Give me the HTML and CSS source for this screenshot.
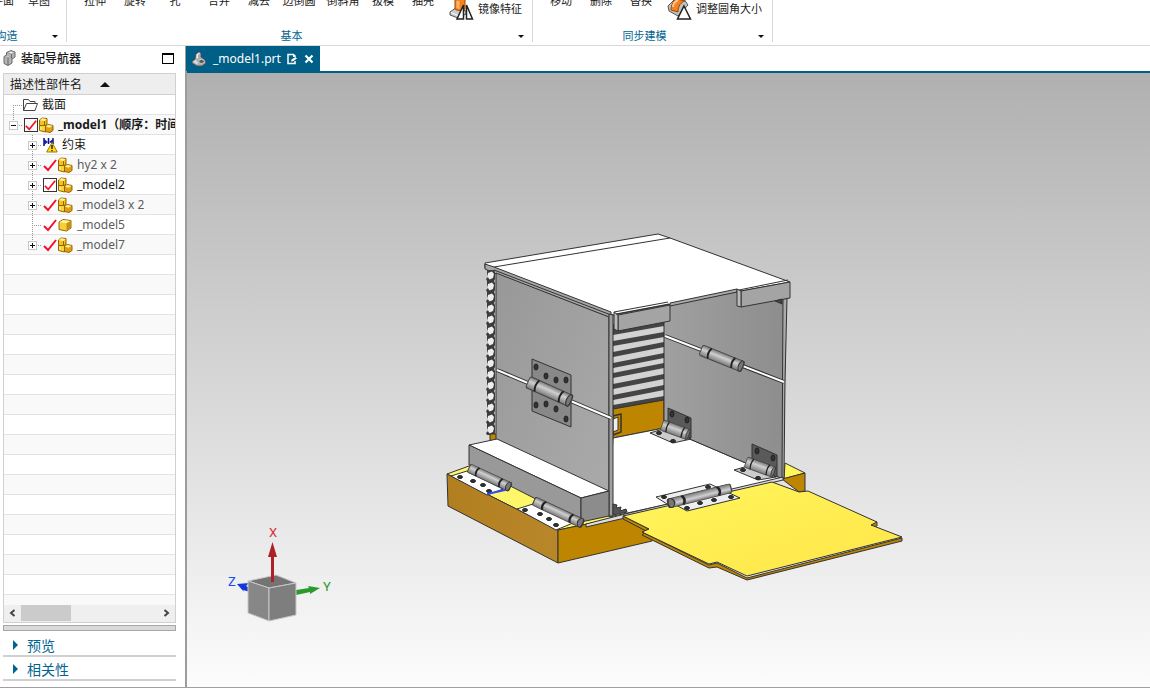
FILE: index.html
```
<!DOCTYPE html>
<html lang="zh-CN">

<head>
  <meta charset="UTF-8">
  <meta name="viewport" content="width=device-width, initial-scale=1.0">
  <title>_model1.prt</title>
  <link rel="stylesheet" href="styles.css">
</head>

<body>
  <svg class="sprite" aria-hidden="true">
    <symbol id="assembly" viewBox="0 0 16 16">
      <path d="M1.500 3 4 1l5 .5V7l-2 1.500H1.500z" fill="#f2c21c" stroke="#936600"/>
      <path d="M2 3.300l4.500.7L8.500 2 4 1.300z" fill="#fff29a"/>
      <path d="M6.500 4v4" stroke="#936600"/>
      <path d="M1.500 8.500H7.500V15L1.500 13.500z" fill="#f8d33a" stroke="#936600"/>
      <path d="M7.500 9.500 10 7.500l5 1v5L12 15.500l-4.500-1z" fill="#dfa112" stroke="#936600"/>
      <path d="M8 9.700l3.700 1L14.500 8.800 10 7.900z" fill="#fff08a"/>
      <path d="M3 10v3" stroke="#fff7b8"/>
    </symbol>
    <symbol id="part" viewBox="0 0 16 16">
      <path d="M2 5 6 2.500l8 1v7.500L9.500 14 2 12.500z" fill="#f6cf3c" stroke="#936600"/>
      <path d="M2.500 5.200 9.500 6.200 13.500 4 6 3z" fill="#fff3a0"/>
      <path d="M9.500 6.200 13.600 4v6.800L9.500 13.500z" fill="#c98f0c"/>
    </symbol>
  </svg>

  <header class="ribbon">
    <section class="group group-first">
      <div class="tools">
        <button class="tool narrow">平面</button>
        <button class="tool narrow">草图</button>
      </div>
      <div class="caption"><span>构造</span><button class="more" aria-label="更多构造"></button></div>
    </section>
    <section class="group group-basic">
      <div class="tools">
        <button class="tool">拉伸</button>
        <button class="tool">旋转</button>
        <button class="tool">孔</button>
        <button class="tool start">合并</button>
        <button class="tool">减去</button>
        <button class="tool">边倒圆</button>
        <button class="tool start">倒斜角</button>
        <button class="tool">拔模</button>
        <button class="tool">抽壳</button>
        <button class="tool-wide">
          <svg width="26" height="24" viewBox="0 0 26 24">
            <path d="M1 14 8 9l9 4v3l-8 4-8-3z" fill="#c9ccce" stroke="#555"/>
            <path d="M2 14.500l7 3 7-3" fill="none" stroke="#fff"/>
            <path d="M6 1h10v10c-2 2-8 2-10 0z" fill="#f58220" stroke="#9c4700"/>
            <path d="M7.500 3h3v8l-3-1z" fill="#ffb36b"/>
            <path d="M14.500 7v14H8zM17.500 7v14h6z" fill="#fff" stroke="#222" stroke-width="1.500"/>
          </svg>
          <span>镜像特征</span>
        </button>
      </div>
      <div class="caption"><span>基本</span><button class="more" aria-label="更多基本"></button></div>
    </section>
    <section class="group group-sync">
      <div class="tools">
        <button class="tool">移动</button>
        <button class="tool">删除</button>
        <button class="tool">替换</button>
        <button class="tool-wide">
          <svg width="26" height="24" viewBox="0 0 26 24">
            <path d="M1 8 8 1l9 0 4 6-10 11L2 13z" fill="#bfc2c4" stroke="#555"/>
            <path d="M4 12c0-6 3-10 6-11l8 2c-4 1-7 5-7 11z" fill="#f58220" stroke="#9c4700"/>
            <path d="M6 9c0-4 3-6 5-7" fill="none" stroke="#ffc48c" stroke-width="2"/>
            <path d="M17 8l6.500 13h-13z" fill="#fff" stroke="#222" stroke-width="1.500"/>
          </svg>
          <span>调整圆角大小</span>
        </button>
      </div>
      <div class="caption"><span>同步建模</span><button class="more" aria-label="更多同步建模"></button></div>
    </section>
  </header>

  <div class="workspace">
    <aside class="navigator">
      <div class="nav-title">
        <svg width="14" height="16" viewBox="0 0 14 16">
          <path d="M1 6.500 3.500 5V2.500L8 .5l4 1.500v5L9 9v4l-4 2.500-4-2z" fill="#b4b4b4" stroke="#666"/>
          <path d="M4 2.700 8.500 4 11.500 2.300 8 1zM1.500 6.700l3.500 1L8 6.500" fill="#eee" stroke="#888" stroke-width=".7"/>
          <path d="M8.500 4v4.500M5 8v7" stroke="#666"/>
        </svg>
        <h1>装配导航器</h1>
        <button class="maximize" aria-label="最大化"></button>
      </div>

      <div class="tree-panel">
        <button class="column-head">描述性部件名 <i></i></button>
        <ul class="tree">
          <li class="row">
            <span class="branch first"></span>
            <svg class="folder" width="15" height="16" viewBox="0 0 15 16">
              <path d="M.5 13.500V2.500h5l1.500 2h5v2M.5 13.500 3.500 6.500h11l-2.500 7z" fill="#fff" stroke="#444"/>
            </svg>
            <span class="name">截面</span>
          </li>
          <li class="row bold">
            <span class="branch last"><button class="expander" aria-label="折叠"></button></span>
            <input type="checkbox" class="check boxed" aria-label="_model1" checked>
            <svg class="cube" width="16" height="16"><use href="#assembly"/></svg>
            <span class="name">_model1（顺序：时间顺序）</span>
          </li>
          <li class="row child">
            <span class="branch"><button class="expander plus" aria-label="展开"></button></span>
            <svg class="constraint" width="15" height="16" viewBox="0 0 15 16">
              <path d="M1 1v8M10 1v6M5.500 1v6" stroke="#0a1280" stroke-width="1.500"/>
              <path d="M1 2l4 3-4 3zM10 2 6 5l4 2z" fill="#1522b0"/>
              <path d="M9 5.500 14.300 15H3.700z" fill="#ffdd1a" stroke="#a07800"/>
              <path d="M9 8v4M9 13v1.300" stroke="#222" stroke-width="1.500"/>
            </svg>
            <span class="name">约束</span>
          </li>
          <li class="row child">
            <span class="branch"><button class="expander plus" aria-label="展开"></button></span>
            <input type="checkbox" class="check" aria-label="hy2 x 2" checked>
            <svg class="cube" width="16" height="16"><use href="#assembly"/></svg>
            <span class="name dim">hy2 x 2</span>
          </li>
          <li class="row child">
            <span class="branch"><button class="expander plus" aria-label="展开"></button></span>
            <input type="checkbox" class="check boxed" aria-label="_model2" checked>
            <svg class="cube" width="16" height="16"><use href="#assembly"/></svg>
            <span class="name">_model2</span>
          </li>
          <li class="row child">
            <span class="branch"><button class="expander plus" aria-label="展开"></button></span>
            <input type="checkbox" class="check" aria-label="_model3 x 2" checked>
            <svg class="cube" width="16" height="16"><use href="#assembly"/></svg>
            <span class="name dim">_model3 x 2</span>
          </li>
          <li class="row child">
            <span class="branch"></span>
            <input type="checkbox" class="check" aria-label="_model5" checked>
            <svg class="cube" width="16" height="16"><use href="#part"/></svg>
            <span class="name dim">_model5</span>
          </li>
          <li class="row child">
            <span class="branch last"><button class="expander plus" aria-label="展开"></button></span>
            <input type="checkbox" class="check" aria-label="_model7" checked>
            <svg class="cube" width="16" height="16"><use href="#assembly"/></svg>
            <span class="name dim">_model7</span>
          </li>
        </ul>
        <div class="scrollbar">
          <button aria-label="向左"><svg width="7" height="8" viewBox="0 0 7 8"><path d="M5.500 1 2 4l3.500 3" fill="none" stroke="#444" stroke-width="2"/></svg></button>
          <div class="track"><div class="thumb"></div></div>
          <button aria-label="向右"><svg width="7" height="8" viewBox="0 0 7 8"><path d="M1.500 1 5 4 1.500 7" fill="none" stroke="#444" stroke-width="2"/></svg></button>
        </div>
      </div>

      <div class="splitter"></div>
      <button class="fold">预览</button>
      <button class="fold">相关性</button>
    </aside>

    <main class="view">
      <div class="tabs">
        <div class="tab">
          <svg width="16" height="16" viewBox="0 0 16 16">
            <path d="M1 10.500 4 8 5 3l3-2 2 1v4l4 3 1 3-4 3H6l-5-3z" fill="#a9adb0" stroke="#4a4a4a" stroke-width=".8"/>
            <path d="M5.500 3.500 8 1.500l1 .5-2 2v3l-1.500 1z" fill="#eceeef"/>
            <path d="M2 10.500l3-1.500 2 3-1 1.500z" fill="#dadddf"/>
            <ellipse cx="10.500" cy="10.500" rx="2.800" ry="2" fill="#54595d" stroke="#ddd" stroke-width=".8"/>
          </svg>
          <span>_model1.prt</span>
          <svg width="11" height="12" viewBox="0 0 11 12">
            <path d="M8 8v2.500H1V1.500h5.500L8.500 3.500" fill="none" stroke="#fff" stroke-width="1.500"/>
            <path d="M6 1v3h3z" fill="#fff"/>
            <path d="M4 8.500 4.500 6.500 8.500 4l1.500 1.500L6 8.200z" fill="#fff"/>
          </svg>
          <button class="close" aria-label="关闭">
            <svg width="10" height="10" viewBox="0 0 10 10"><path d="M1.500 1.500l7 7M8.500 1.500l-7 7" stroke="#fff" stroke-width="2.200"/></svg>
          </button>
        </div>
      </div>

      <svg class="canvas" viewBox="187 73 963 614" role="img" aria-label="装配模型">
        <defs>
          <linearGradient id="wall" x1="0" y1="0" x2="1" y2="1">
            <stop offset="0" stop-color="#989898"/><stop offset="1" stop-color="#ababab"/>
          </linearGradient>
          <linearGradient id="inner" x1="0" y1="0" x2="1" y2="0">
            <stop offset="0" stop-color="#a0a0a0"/><stop offset="1" stop-color="#8d8d8d"/>
          </linearGradient>
          <linearGradient id="ramp" x1="0" y1="0" x2="1" y2="1">
            <stop offset="0" stop-color="#fff55c"/><stop offset="1" stop-color="#ffe648"/>
          </linearGradient>
          <linearGradient id="gold" x1="0" y1="0" x2="1" y2="0">
            <stop offset="0" stop-color="#b27f20"/><stop offset="1" stop-color="#b88729"/>
          </linearGradient>
          <linearGradient id="tube" x1="0" y1="0" x2="0" y2="1">
            <stop offset="0" stop-color="#777"/><stop offset=".4" stop-color="#d0d0d0"/><stop offset="1" stop-color="#777"/>
          </linearGradient>
          <pattern id="chain" x="485" y="270" width="11" height="11" patternUnits="userSpaceOnUse">
            <path d="M2 0 9 0 10 2V9L9 11H2L1 9 3 7 2 4z" fill="#3c3c3c"/>
            <path d="M3 3 7 1.500 9 4 8 8 4.500 9.500 2.500 6.500z" fill="#eee"/>
          </pattern>
          <!-- hinge barrel, 48 long on the x axis -->
          <g id="barrel">
            <rect x="0" y="-6" width="48" height="12" rx="2" fill="url(#tube)" stroke="#444"/>
            <path d="M10-6q-3 6 0 12M37-6q-3 6 0 12" fill="none" stroke="#222" stroke-width="2"/>
            <path d="M45-6q-4 6 0 12h2q2-6 0-12z" fill="#777" stroke="#333"/>
          </g>
        </defs>

        <g class="edges">
          <!-- base -->
          <path d="M447 474 469 466 623 514 623 517 558 530z" fill="#fff76a"/>
          <path d="M447 474 558 530V563L448 506z" fill="url(#gold)"/>
          <path d="M558 530 625 516 655 530 652 541 558 563z" fill="#bd8500"/>
          <path d="M785 463 805 473 784 479z" fill="#fff55c"/>
          <path d="M782 479 805 473V491L799 492z" fill="#bd8500"/>

          <!-- inside of the box -->
          <path d="M613 325 664 312V402L613 411z" fill="#444"/>
          <path class="slats" d="M613 335 664 326V332L613 341zM613 346 664 337V342L613 352zM613 357 664 347V353L613 363zM613 368 664 358V363L613 373zM613 378 664 368V374L613 384zM613 389 664 379V385L613 395zM613 400 664 390V396L613 405z"/>
          <path d="M613 409 664 400V428L613 438z" fill="#bd8500"/>
          <path d="M613 416 621 414V432L613 435z" fill="#bd8500" stroke-width="1.500"/>
          <path d="M613 419 618 417V430L613 432z" fill="#eee"/>
          <path d="M613 438 664 428 783 479 609 517V500z" fill="#fff"/>
          <path d="M664 304 738 289 786 298 783 479 664 428z" fill="url(#inner)"/>
          <path d="M783 299 787 298 785 381 784 479 782 477z" fill="#aaa"/>
          <path d="M665 336 784 382" stroke="#333" stroke-width="4"/>
          <path d="M665 336 784 382" stroke="#fff" stroke-width="2"/>
          <use href="#barrel" transform="translate(701 350) rotate(22) scale(.94 .9)"/>

          <!-- lid -->
          <path d="M485 263 658 234 670 238 790 282 741 291 613 315 485 268z" fill="#fff"/>
          <path d="M494 267 670 238" fill="none"/>
          <path d="M485 264 494 267 611 312 611 318 494 273 485 269z" fill="#a6a6a6"/>
          <path d="M494 270 611 315" fill="none"/>
          <path d="M670 303 737 289V292L670 306z" fill="#aaa"/>
          <path d="M741 291 790 282V298L741 307z" fill="#a4a4a4"/>
          <path d="M737 289 741 291V307L737 306z" fill="#bbb"/>
          <path d="M739 290 788 280" fill="none"/>
          <path d="M775 301 782 299V304z" fill="#444"/>
          <path d="M618 315 670 305V321L618 331z" fill="#a4a4a4"/>
          <path d="M614 312 618 315V331L614 329z" fill="#bbb"/>
          <path d="M614 312 668 302M616 314 669 304" fill="none"/>

          <!-- left wall and chain -->
          <rect x="485" y="270" width="11" height="165" fill="url(#chain)" stroke="none"/>
          <path d="M490 434H497V442H490z" fill="#bd8500"/>
          <path d="M496 273 609 317V516L496 460z" fill="url(#wall)"/>
          <path d="M609 314 613 315V516H609z" fill="#a0a0a0"/>
          <path d="M497 370 611 418" stroke="#333" stroke-width="4"/>
          <path d="M497 370 611 418" stroke="#fff" stroke-width="2"/>
          <path d="M532 359 571 375V427L532 411z" fill="#888"/>
          <g class="holes">
            <ellipse cx="536" cy="367" rx="2" ry="3"/><ellipse cx="546" cy="376" rx="2" ry="3"/>
            <ellipse cx="556" cy="380" rx="2" ry="3"/><ellipse cx="566" cy="380" rx="2" ry="3"/>
            <ellipse cx="536" cy="405" rx="2" ry="3"/><ellipse cx="546" cy="404" rx="2" ry="3"/>
            <ellipse cx="556" cy="409" rx="2" ry="3"/><ellipse cx="566" cy="419" rx="2" ry="3"/>
          </g>
          <use href="#barrel" transform="translate(528 382) rotate(24) scale(.98 1)"/>

          <!-- step block -->
          <path d="M469 445 497 439 609 491 581 498z" fill="#fff"/>
          <path d="M469 445 581 498V522L469 465z" fill="#999"/>
          <path d="M581 498 609 491V516L581 522z" fill="#8c8c8c"/>
          <path d="M586 524 625 514 783 477V480L625 518 586 527z" fill="#ddd"/>
          <path d="M613 504 617 505 616 508 621 507 620 511 626 509 627 512 613 515z" fill="#555"/>

          <!-- outer hinges -->
          <path d="M451 476 467 471 503 489 487 495z" fill="#fff"/>
          <path d="M517 509 533 504 573 523 556 530z" fill="#fff"/>
          <g class="holes">
            <ellipse cx="460" cy="477" rx="2.500" ry="1.500"/><ellipse cx="473" cy="481" rx="2.500" ry="1.500"/>
            <ellipse cx="483" cy="485" rx="2.500" ry="1.500"/><ellipse cx="489" cy="491" rx="2.500" ry="1.500"/>
            <ellipse cx="525" cy="510" rx="2.500" ry="1.500"/><ellipse cx="540" cy="514" rx="2.500" ry="1.500"/>
            <ellipse cx="549" cy="519" rx="2.500" ry="1.500"/><ellipse cx="556" cy="525" rx="2.500" ry="1.500"/>
          </g>
          <use href="#barrel" transform="translate(469 468) rotate(25) scale(.95 .75)"/>
          <use href="#barrel" transform="translate(534 501) rotate(25) scale(1.120 .75)"/>
          <path d="M487 494 505 490" stroke="#2d4cff" stroke-width="2"/>

          <!-- inner hinges -->
          <path d="M668 408 691 418V438L668 430z" fill="#5a5a5a"/>
          <path d="M650 433 663 429 691 439 673 443z" fill="#ccc"/>
          <path d="M752 444 777 455V477L752 466z" fill="#5a5a5a"/>
          <path d="M734 470 748 466 776 477 758 480z" fill="#ccc"/>
          <g class="holes">
            <ellipse cx="672" cy="414" rx="2" ry="3"/><ellipse cx="687" cy="420" rx="2" ry="3"/>
            <ellipse cx="757" cy="451" rx="2" ry="3"/><ellipse cx="773" cy="458" rx="2" ry="3"/>
            <ellipse cx="659" cy="433" rx="2.500" ry="1.500"/><ellipse cx="673" cy="441" rx="2.500" ry="1.500"/>
            <ellipse cx="743" cy="470" rx="2.500" ry="1.500"/><ellipse cx="758" cy="478" rx="2.500" ry="1.500"/>
          </g>
          <use href="#barrel" transform="translate(662 425) rotate(20) scale(.6 .9)"/>
          <use href="#barrel" transform="translate(746 462) rotate(20) scale(.63 .9)"/>

          <!-- ramp -->
          <path d="M623 516 649 529 642 532 709 565 717 563 747 578 902 538V541L747 580 717 567 709 568 642 535 646 531 623 519z" fill="#bd8500"/>
          <path d="M871 524 877 522V526L873 527z" fill="#bd8500"/>
          <path d="M623 516 772 482 799 492 808 491 877 522 871 525 902 537 747 576 717 562 709 564 642 532 649 529z" fill="url(#ramp)"/>
          <path d="M656 497 710 484 740 498 687 511 676 505 667 504z" fill="#eee"/>
          <g class="holes">
            <ellipse cx="687" cy="508" rx="2.500" ry="1.500"/><ellipse cx="700" cy="503" rx="2.500" ry="1.500"/>
            <ellipse cx="714" cy="500" rx="2.500" ry="1.500"/><ellipse cx="731" cy="497" rx="2.500" ry="1.500"/>
            <ellipse cx="664" cy="497" rx="2.500" ry="1.500"/><ellipse cx="708" cy="487" rx="2.500" ry="1.500"/>
          </g>
          <use href="#barrel" transform="translate(731 488) rotate(166) scale(1.350 .75)"/>
        </g>

        <!-- axis triad -->
        <path d="M237 584 249 583 246 586 250 588V592L243 590 244 592z" fill="#1438d8"/>
        <path d="M296 590 309 588 308 586 320 588 310 594V592L296 595z" fill="#2a9a2a"/>
        <g class="triad">
          <path d="M248 581 276 575 296 583 269 588z" fill="#747474"/>
          <path d="M248 581 269 588V621L248 613z" fill="#878787"/>
          <path d="M269 588 296 583V615L269 621z" fill="#7e7e7e"/>
        </g>
        <path d="M271 582V557H268L272.500 542 277 557H274V582z" fill="#ad2028"/>
        <text class="axis" x="273" y="537" fill="#d92f3a">X</text>
        <text class="axis" x="232" y="586" fill="#1b4df0">Z</text>
        <text class="axis" x="327" y="591" fill="#2a9a2a">Y</text>
      </svg>
    </main>
  </div>
</body>

</html>
```
FILE: styles.css
```
* {
  box-sizing: border-box;
}

body {
  margin: 0;
  height: 100vh;
  display: flex;
  flex-direction: column;
  overflow: hidden;
  background: #fff;
  color: #1a1a1a;
  font-family: "Noto Sans", "Noto Sans CJK SC", sans-serif;
  font-size: 12px;
}

button {
  margin: 0;
  padding: 0;
  border: none;
  background: none;
  color: inherit;
  font: inherit;
  cursor: pointer;
}

svg {
  display: block;
  flex: none;
}

.sprite {
  position: absolute;
  width: 0;
  height: 0;
}

/* ribbon */
.ribbon {
  display: flex;
  flex: none;
  height: 46px;
  overflow: hidden;
  border-bottom: 1px solid #d8d8d8;
  font-size: 11px;
}

.group {
  display: flex;
  flex-direction: column;
  justify-content: flex-end;
  flex: none;
  height: 42px;
  padding-left: 8px;
  border-right: 1px solid #d8d8d8;
}

.group-first {
  width: 104px;
  margin-left: -37px;
}

.group-basic {
  width: 466px;
}

.group-sync {
  width: 240px;
}

.tools {
  display: flex;
  align-items: flex-end;
  height: 48px;
  padding-bottom: 6px;
}

.group-first .tools {
  justify-content: flex-end;
  padding-right: 9px;
}

.tool {
  width: 40px;
  height: 29px;
  padding-bottom: 13px;
  line-height: 16px;
  white-space: nowrap;
}

.narrow {
  width: 36px;
}

.start {
  margin-left: 4px;
}

.tool-wide {
  display: flex;
  align-items: center;
  gap: 3px;
  height: 24px;
  margin-left: 6px;
  white-space: nowrap;
}

.tool-wide span {
  padding-bottom: 5px;
}

.caption {
  display: flex;
  align-items: center;
  flex: none;
  height: 16px;
  margin-bottom: -2px;
  color: #00648f;
}

.caption span {
  flex: 1;
  padding: 0 2px 2px 0;
  text-align: center;
}

.more {
  width: 22px;
  height: 12px;
  display: flex;
  align-items: center;
  justify-content: center;
}

.more::after {
  content: "";
  border: 3px solid transparent;
  border-top-color: #111;
  border-bottom: none;
}

.workspace {
  display: flex;
  flex: 1;
  min-height: 0;
  margin-bottom: 3px;
  border-bottom: 1px solid #a0a0a0;
}

/* navigator */
.navigator {
  display: flex;
  flex-direction: column;
  flex: none;
  width: 187px;
  padding: 0 9px 6px 3px;
  border-right: 2px solid #9c9c9c;
}

.nav-title {
  display: flex;
  align-items: center;
  gap: 4px;
  height: 27px;
  padding-bottom: 3px;
}

.nav-title h1 {
  flex: 1;
  margin: 0;
  font-size: 12px;
  font-weight: 500;
}

.maximize {
  width: 12px;
  height: 11px;
  margin-right: 2px;
  border: 1px solid #000;
  border-top-width: 2px;
}

.tree-panel {
  display: flex;
  flex-direction: column;
  flex: 1;
  min-height: 0;
  border: 1px solid #d0d0d0;
}

.column-head {
  display: flex;
  align-items: center;
  gap: 18px;
  flex: none;
  height: 21px;
  padding-left: 6px;
  background: #eee;
  border-bottom: 1px solid #d0d0d0;
}

.column-head i {
  border: 5px solid transparent;
  border-bottom-color: #111;
  border-top: none;
}

.tree {
  flex: 1;
  margin: 0;
  padding: 0;
  overflow: hidden;
  list-style: none;
  background: repeating-linear-gradient(#fff 0 19px, #e3e3e3 19px 20px, #f9f9f9 20px 39px, #e3e3e3 39px 40px);
}

.row {
  display: flex;
  align-items: center;
  height: 20px;
  white-space: nowrap;
}

.child {
  padding-left: 19px;
}

.bold {
  font-weight: 700;
}

.branch {
  display: flex;
  align-items: center;
  justify-content: center;
  flex: none;
  width: 19px;
  height: 20px;
  margin-right: 1px;
  background:
    repeating-linear-gradient(#999 0 1px, transparent 1px 2px) 9px 0 / 1px 20px no-repeat,
    repeating-linear-gradient(90deg, #999 0 1px, transparent 1px 2px) 9px 10px / 10px 1px no-repeat;
}

.branch.last {
  background-size: 1px 10px, 10px 1px;
}

.branch.first {
  margin-right: 0;
  background-size: 1px 10px, 10px 1px;
  background-position: 9px 10px, 9px 10px;
}

.expander {
  width: 9px;
  height: 9px;
  border: 1px solid #c8c8c8;
  background: linear-gradient(#111, #111) center / 5px 1px no-repeat #fff;
}

.expander.plus {
  background:
    linear-gradient(#111, #111) center / 5px 1px no-repeat,
    linear-gradient(#111, #111) center / 1px 5px no-repeat #fff;
}

.check {
  appearance: none;
  flex: none;
  width: 14px;
  height: 14px;
  margin: 0;
}

.check:checked {
  background: url("data:image/svg+xml,%3Csvg xmlns='http://www.w3.org/2000/svg' viewBox='0 0 14 14'%3E%3Cpath d='M1 8l4 4 8-10' fill='none' stroke='%23f5102c' stroke-width='2'/%3E%3C/svg%3E") center / 100% 100% no-repeat;
}

.boxed {
  border: 1px solid #333;
  background-color: #fff;
}

.name {
  margin-left: 4px;
  padding-bottom: 2px;
}

.dim {
  color: #5c5c5c;
}

.scrollbar {
  display: flex;
  flex: none;
  height: 17px;
  padding-bottom: 1px;
  background: #efefef;
}

.scrollbar button {
  display: flex;
  align-items: center;
  justify-content: center;
  width: 17px;
}

.track {
  flex: 1;
}

.thumb {
  width: 50px;
  height: 16px;
  background: #cbcbcb;
}

.splitter {
  flex: none;
  height: 6px;
  margin: 2px 0;
  border: 1px solid #a6a6a6;
  background: #dadada;
}

.fold {
  display: flex;
  align-items: center;
  gap: 9px;
  flex: none;
  height: 24px;
  padding: 2px 0 0 10px;
  border-bottom: 2px solid #d0d0d0;
  color: #00648f;
  font-size: 14px;
}

.fold::before {
  content: "";
  border: 5px solid transparent;
  border-left-color: #00648f;
  border-right: none;
}

/* graphics view */
.view {
  display: flex;
  flex-direction: column;
  flex: 1;
  min-width: 0;
}

.tabs {
  display: flex;
  flex: none;
  height: 27px;
  border-bottom: 2px solid #005f87;
}

.tab {
  display: flex;
  align-items: center;
  gap: 6px;
  padding: 0 6px 0 5px;
  margin-left: -1px;
  background: #005f87;
  color: #fff;
}

.close {
  display: flex;
}

.canvas {
  flex: 1;
  width: 100%;
  min-height: 0;
  background: linear-gradient(#b0b0b0, #fcfcfc);
}

.edges {
  stroke: #333;
  stroke-width: 1;
  stroke-linejoin: round;
}

.slats {
  fill: #d2d2d2;
  stroke: none;
}

.holes {
  fill: #333;
  stroke: #222;
}

.triad {
  stroke: #c8c8c8;
}

.axis {
  font-family: Roboto, sans-serif;
  font-size: 13px;
  text-anchor: middle;
}
```
